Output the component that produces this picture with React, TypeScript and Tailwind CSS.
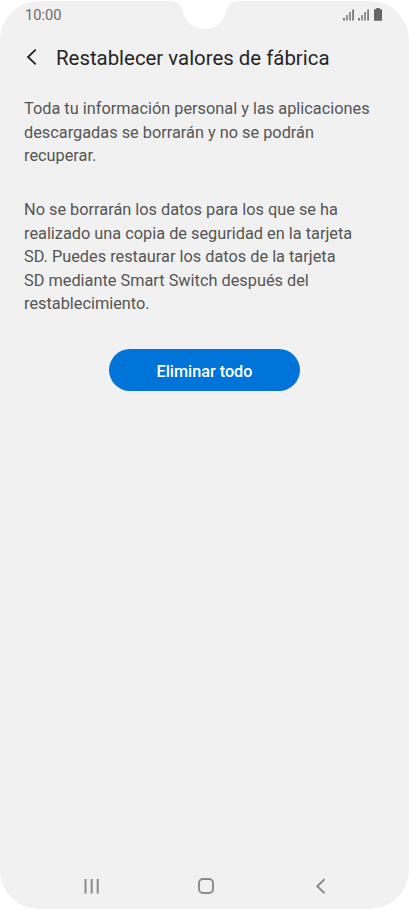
const WARNING_LINES = [
  "Toda tu información personal y las aplicaciones",
  "descargadas se borrarán y no se podrán",
  "recuperar.",
];

const BACKUP_LINES = [
  "No se borrarán los datos para los que se ha",
  "realizado una copia de seguridad en la tarjeta",
  "SD. Puedes restaurar los datos de la tarjeta",
  "SD mediante Smart Switch después del",
  "restablecimiento.",
];

interface ParagraphProps {
  lines: string[];
}

function Paragraph({ lines }: ParagraphProps) {
  return (
    <p className="text-[16.32px] leading-[23.5px] text-[#555555]">
      {lines.map((line) => (
        <span key={line} className="block whitespace-nowrap">
          {line}
        </span>
      ))}
    </p>
  );
}

function SignalIcon() {
  return (
    <svg width="12" height="12" viewBox="0 0 12 12" fill="#7a7a7a" aria-hidden="true">
      <rect x="0" y="9" width="2" height="2.5" />
      <rect x="3.2" y="6" width="1.6" height="5.5" />
      <rect x="6.2" y="3" width="1.6" height="8.5" />
      <rect x="9.2" y="0.5" width="1.8" height="11" />
    </svg>
  );
}

function StatusBar() {
  return (
    <header className="flex h-[29px] items-center justify-between pl-[25px] pr-[27px]">
      <span className="text-[14.7px] text-[#6b6b6b]">10:00</span>
      <div className="flex items-center gap-[3px] pb-[2px]">
        <SignalIcon />
        <SignalIcon />
        <svg className="ml-px" width="8" height="13" viewBox="0 0 8 13" fill="#666666" aria-hidden="true">
          <path d="M2.2 0h3.6v1.3H8v11.4H0V1.3h2.2z" />
        </svg>
      </div>
    </header>
  );
}

function NavigationBar() {
  return (
    <nav className="mt-auto flex h-[46px] items-center justify-between pl-[84px] pr-[82px]">
      <svg width="16" height="16" viewBox="0 0 16 16" stroke="#8a8a8a" strokeWidth="2" aria-hidden="true">
        <path d="M1.5 1v14.5M7.7 1v14.5M13.7 1v14.5" />
      </svg>
      <svg width="16" height="16" viewBox="0 0 16 16" fill="none" stroke="#8a8a8a" strokeWidth="1.9" aria-hidden="true">
        <rect x="1" y="1" width="14" height="14" rx="4" />
      </svg>
      <svg width="16" height="16" viewBox="0 0 16 16" fill="none" stroke="#8a8a8a" strokeWidth="1.9" aria-hidden="true">
        <path d="M13.5 1.2 6.3 8.2l7.2 7" />
      </svg>
    </nav>
  );
}

export default function App() {
  return (
    <div className="h-[910px] w-[409px] overflow-hidden bg-white pt-px font-['Roboto',sans-serif]">
      <div className="relative flex h-[908px] flex-col overflow-hidden rounded-[39px] bg-[#f1f1f1]">
        <svg className="absolute left-[170px] top-0" width="70" height="29" viewBox="0 0 70 29" fill="#ffffff" aria-hidden="true">
          <path d="M0 0h69c-7 .3-11 3-12.5 9C54 21.5 45 28 34.5 28S15 21.5 12.5 9C11 3 7 .3 0 0z" />
        </svg>
        <StatusBar />
        <div className="flex h-[56px] items-center pl-6">
          <svg className="-mt-0.5" width="16" height="18" viewBox="0 0 16 18" fill="none" stroke="#222222" strokeWidth="1.8" aria-hidden="true">
            <path d="M11.7 1.7 4 9l7.7 7.3" />
          </svg>
          <h1 className="ml-4 whitespace-nowrap text-[20.4px] text-[#252525]">Restablecer valores de fábrica</h1>
        </div>
        <main className="flex flex-col px-6 pt-[11px]">
          <Paragraph lines={WARNING_LINES} />
          <div className="mt-[30.5px]">
            <Paragraph lines={BACKUP_LINES} />
          </div>
          <button
            type="button"
            className="mt-[33.8px] h-[42px] w-[191px] self-center rounded-full bg-[#0074d8] pt-[4px] text-[16.2px] font-medium text-white"
          >
            Eliminar todo
          </button>
        </main>
        <NavigationBar />
      </div>
    </div>
  );
}
